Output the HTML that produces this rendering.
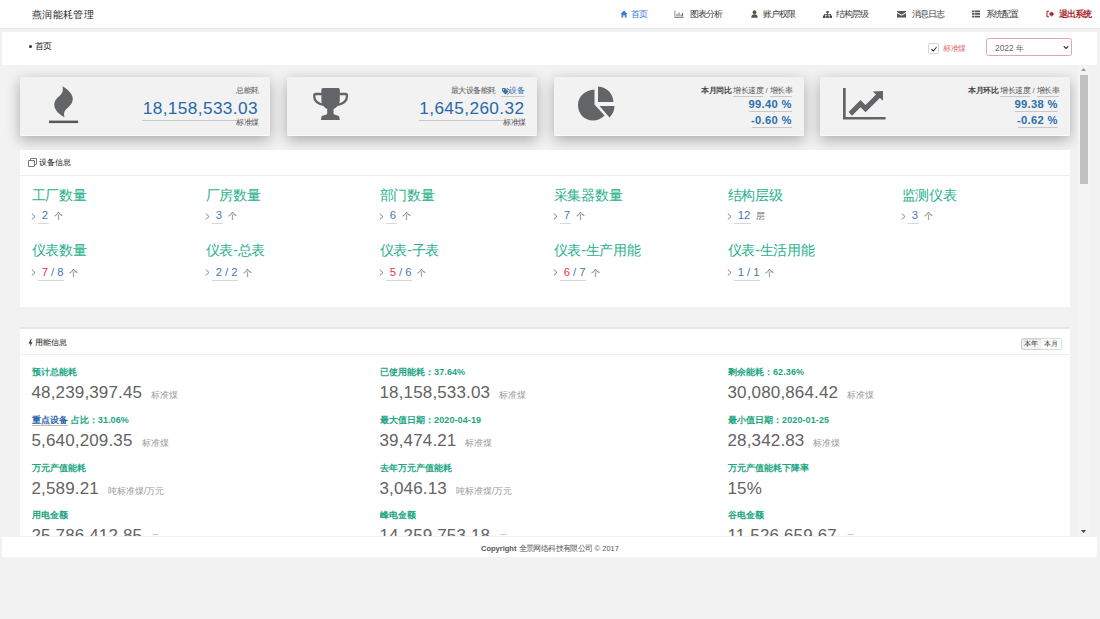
<!DOCTYPE html>
<html><head><meta charset="utf-8">
<style>
*{box-sizing:border-box;margin:0;padding:0}
html,body{width:1100px;height:619px;overflow:hidden;background:#f2f2f2;font-family:"Liberation Sans",sans-serif;color:#333}
.a{position:absolute;white-space:nowrap;line-height:1}
#hdr{position:absolute;left:0;top:0;width:1100px;height:28px;background:#fff;box-shadow:0 1px 2px rgba(0,0,0,.06)}
.nav{position:absolute;top:9.5px;font-size:8px;color:#3c3c3c;line-height:1}
.nav span{position:relative;top:.7px;font-size:8.6px;letter-spacing:-.9px}
.nav svg{position:absolute;top:0}
#bc{position:absolute;left:2px;top:32px;width:1095px;height:33px;background:#fff}
#scroll{position:absolute;left:0;top:65px;width:1100px;height:471px;overflow:hidden}
.card{position:absolute;top:77px;width:250px;height:59px;background:#f2f2f2;border-radius:2px;box-shadow:0 4px 14px rgba(0,0,0,.3),inset 0 -1px 0 #fafafa}
.panel{position:absolute;left:20px;width:1050px;background:#fff}
.ph{position:absolute;left:0;top:0;width:100%;border-bottom:1px solid #ececec}
.lbl{font-size:14px;color:#28b08c;letter-spacing:-.3px}
.gt{font-size:9px;color:#4a74b4}
.val{font-size:11.5px;color:#3f6fae}
.unit{font-size:8px;color:#777}
.ul{position:absolute;height:1px;background:#c9c9c9}
.tl{font-size:9px;color:#1ba581;font-weight:bold;letter-spacing:.1px}
.big{font-size:17px;color:#636363;letter-spacing:.15px}
.u2{font-size:8.5px;color:#999}
#inner{position:absolute;left:0;top:-65px;width:1100px;height:700px}
.num{font-size:17.2px;color:#2668a8;letter-spacing:.4px}
.pct{font-size:11.2px;color:#2c6fb0;font-weight:bold;letter-spacing:.3px}
.hd{font-size:7.5px;color:#555;letter-spacing:-.5px}
.vrow{font-size:11.3px;line-height:1}
.chev{display:inline-block;width:11px;color:#4a72b8;font-size:13px}
.vv{border-bottom:1px solid #d8d8d8;padding:0 0.5px 2px 4px}
.bl{color:#4a74b4}.rd{color:#e0353f}.sl{color:#4a74b4;margin:0 3px}
.unit{font-size:9px;color:#666;margin-left:5px}
.tl .pre{color:#2d64a8;border-bottom:1px solid #c9b9a0}
.nrow{line-height:1}
.u2{margin-left:9px}
</style></head><body>

<div id="hdr">
  <div class="a" style="left:32px;top:9.5px;font-size:10px;letter-spacing:.35px;color:#222">燕润能耗管理</div>
  <div class="nav" style="left:620px;color:#3a7bd5">
    <svg width="8" height="8" viewBox="0 0 16 16" style="left:0"><path fill="#3a7bd5" d="M8 1 L1 8 L3 8 L3 15 L6.5 15 L6.5 10.5 L9.5 10.5 L9.5 15 L13 15 L13 8 L15 8 Z"/></svg>
    <span style="margin-left:11px">首页</span></div>
  <div class="nav" style="left:674px">
    <svg width="10" height="8" viewBox="0 0 20 16" style="left:0"><path fill="#666" d="M1 1h1.5v13h17v1.5H1z M5 8h2v5H5z M9 5h2v8H9z M13 9h2v4h-2z M16 6h2v7h-2z"/></svg>
    <span style="margin-left:16px">图表分析</span></div>
  <div class="nav" style="left:751px">
    <svg width="7" height="8" viewBox="0 0 14 16" style="left:0"><circle cx="7" cy="4.5" r="3.8" fill="#555"/><path fill="#555" d="M0.5 15.5 C0.5 10 3 8.5 7 8.5 C11 8.5 13.5 10 13.5 15.5Z"/></svg>
    <span style="margin-left:12px">账户权限</span></div>
  <div class="nav" style="left:823px">
    <svg width="9" height="7" viewBox="0 0 18 14" style="left:0;top:1.5px"><path fill="#444" d="M6.8 0h4.4v4H6.8z M8.3 4h1.4v2.6H8.3z M2.2 6.2h13.6v1.4H2.2z M2.2 6.2h1.4v3H2.2z M14.4 6.2h1.4v3h-1.4z M8.3 6.2h1.4v3H8.3z M0 9h5v5H0z M6.5 9h5v5h-5z M13 9h5v5h-5z"/></svg>
    <span style="margin-left:13px">结构层级</span></div>
  <div class="nav" style="left:897px">
    <svg width="9" height="8" viewBox="0 0 18 16" style="left:0;top:0.5px"><path fill="#555" d="M0 2h18v2.2L9 9.5 0 4.2z M0 6.5l9 5 9-5V15H0z"/></svg>
    <span style="margin-left:14.5px">消息日志</span></div>
  <div class="nav" style="left:972px">
    <svg width="8" height="8" viewBox="0 0 16 16" style="left:0"><path fill="#555" d="M0 1h4v3.5H0z M5 1h11v3.5H5z M0 6.2h4v3.5H0z M5 6.2h11v3.5H5z M0 11.5h4V15H0z M5 11.5h11V15H5z"/></svg>
    <span style="margin-left:13.5px">系统配置</span></div>
  <div class="nav" style="left:1046px;color:#a8232c;font-weight:bold">
    <svg width="8" height="8" viewBox="0 0 16 16" style="left:0"><path fill="#a8232c" d="M6 1.5H2.5Q1 1.5 1 3v10q0 1.5 1.5 1.5H6v-2H3V3.5h3z M7 5h4V2l5 6-5 6v-3H7z"/></svg>
    <span style="margin-left:13px">退出系统</span></div>
</div>

<div id="bc">
  <div class="a" style="left:27px;top:13px;width:3.2px;height:3.2px;border-radius:50%;background:#333"></div>
  <div class="a" style="left:33px;top:10px;font-size:8.6px;letter-spacing:-.7px;color:#222">首页</div>
  <div class="a" style="left:926px;top:11px;width:10.5px;height:10.5px;border:1px solid #d4d4d4;border-radius:2px;background:#fff"></div>
  <svg class="a" style="left:928.5px;top:13.5px" width="6" height="6" viewBox="0 0 12 12"><path d="M1 6.5 L4.5 10 L11 2.5" stroke="#222" stroke-width="2.2" fill="none"/></svg>
  <div class="a" style="left:941px;top:13px;font-size:7.5px;letter-spacing:-.5px;color:#e06a6a">标准煤</div>
  <div class="a" style="left:983.5px;top:6.2px;width:86px;height:17.4px;border:1px solid #e8a4ae;border-radius:2.5px;background:#fff"></div>
  <div class="a" style="left:993px;top:12px;font-size:8.4px;color:#666">2022 年</div>
  <svg class="a" style="left:1061px;top:12.5px" width="6" height="5" viewBox="0 0 12 10"><path d="M1.5 2.5 L6 7 L10.5 2.5" stroke="#333" stroke-width="2.2" fill="none"/></svg>
</div>

<div id="scroll"><div id="inner">
  <!-- cards -->
  <div class="card" style="left:20px">
    <svg class="a" style="left:29px;top:7.5px" width="30" height="39" viewBox="0 0 30 39"><path fill="#626467" d="M13.6 1.2 C17.5 3.5 24 8.5 23.8 14 C23.6 19 19.5 22 16.5 25 C14.8 27 14.6 30 15.6 32.2 C10.5 29.5 5.5 25.5 5.3 20 C5.2 15.5 8.5 12.5 11.5 10 C13.8 8 14.2 4.5 13.6 1.2 Z"/><rect x="0" y="35.6" width="29.1" height="2.5" fill="#58595b"/></svg>
    <div class="a cj" style="right:11.5px;top:10.3px;font-size:7.5px;color:#555;letter-spacing:-.5px">总能耗</div>
    <div class="a num" style="right:12.1px;top:22.8px">18,158,533.03</div>
    <div class="ul" style="left:122px;top:42.5px;width:94px"></div>
    <div class="a cj" style="right:11.5px;top:41.8px;font-size:7.5px;color:#555;letter-spacing:-.5px">标准煤</div>
  </div>
  <div class="card" style="left:287px">
    <svg class="a" style="left:26px;top:11px" width="36" height="34" viewBox="0 0 36 34"><path fill="#626467" d="M8.4 1.6 Q8.4 0 10 0 H25.2 Q26.8 0 26.8 1.6 V12 C26.8 17 23.5 19.5 20.6 21 V26 C21.5 27 25.8 27.2 26.2 28.6 L26.8 32.1 H7.9 L8.5 28.6 C8.9 27.2 13.2 27 14.2 26 V21 C11.5 19.5 8.4 17 8.4 12Z"/><path fill="none" stroke="#626467" stroke-width="2.3" d="M9 6 H2.8 Q1.2 6 1.2 8 C1.2 12.5 5 15.8 10.8 16.8 M26.2 6 H32.4 Q34 6 34 8 C34 12.5 30.2 15.8 24.4 16.8"/></svg>
    <div class="a cj" style="right:41.5px;top:10.3px;font-size:7.5px;color:#555;letter-spacing:-.5px">最大设备能耗</div>
    <svg class="a" style="left:214.8px;top:10.8px" width="8" height="7" viewBox="0 0 16 14"><path fill="#3a6fb0" d="M0 1 V6 L7 13 L13 7 L6 0 H1Z M11 0 H8.5 L15.5 7 L9.5 13 L10.5 14 L17.5 7Z"/><circle cx="3" cy="3.5" r="1.3" fill="#f2f2f2"/></svg>
    <div class="a cj" style="right:13px;top:10.3px;font-size:7.5px;color:#3a6fb0;letter-spacing:-.5px">设备</div>
    <div class="ul" style="left:214px;top:19px;width:24px"></div>
    <div class="a num" style="right:12.6px;top:22.8px">1,645,260.32</div>
    <div class="ul" style="left:132px;top:42.5px;width:84px"></div>
    <div class="a cj" style="right:11.5px;top:41.8px;font-size:7.5px;color:#555;letter-spacing:-.5px">标准煤</div>
  </div>
  <div class="card" style="left:554px">
    <svg class="a" style="left:24px;top:8.5px" width="37" height="36" viewBox="0 0 37 36"><path fill="#626467" d="M16.5 3.5 V18.5 L26.5 29.5 C23.5 32.5 19.5 34.5 15 34.5 C6.5 34.5 0 28 0 19 C0 10.5 7 4 16.5 3.5Z M20 0.5 C29 1 35 7.5 35.5 16 H20Z M21.5 20 H36.5 C36.5 24.5 34.5 28.5 31.5 31.5Z"/></svg>
    <div class="a cj hd" style="left:147px;top:10.2px;color:#444;font-weight:bold">本月同比</div>
    <div class="a cj hd" style="left:179px;top:10.2px">增长速度</div>
    <div class="ul" style="left:179px;top:18.5px;width:30px"></div>
    <div class="a hd" style="left:211.5px;top:10.2px;color:#666">/</div>
    <div class="a cj hd" style="left:215.6px;top:10.2px">增长率</div>
    <div class="ul" style="left:215.5px;top:18.5px;width:22.5px"></div>
    <div class="a pct" style="right:12.3px;top:22.4px">99.40 %</div>
    <div class="ul" style="left:194.6px;top:34px;width:43px"></div>
    <div class="a pct" style="right:12.3px;top:38.4px">-0.60 %</div>
    <div class="ul" style="left:197.5px;top:50.2px;width:40px"></div>
  </div>
  <div class="card" style="left:820px">
    <svg class="a" style="left:22.5px;top:11px" width="43" height="32" viewBox="0 0 43 32"><path fill="#626467" d="M0 0 H2.7 V29 H42.6 V31.6 H0Z M5.6 23.9 L17.5 12 L22.5 17 L33.06 6.44 L29.8 3.5 L40 3 L40 12.7 L36.9 9.9 L22.5 24.3 L17.5 19.3 L9 27.8 Z"/></svg>
    <div class="a cj hd" style="left:148px;top:10.2px;color:#444;font-weight:bold">本月环比</div>
    <div class="a cj hd" style="left:180px;top:10.2px">增长速度</div>
    <div class="ul" style="left:180px;top:18.5px;width:30px"></div>
    <div class="a hd" style="left:212.5px;top:10.2px;color:#666">/</div>
    <div class="a cj hd" style="left:216.6px;top:10.2px">增长率</div>
    <div class="ul" style="left:216.5px;top:18.5px;width:22.5px"></div>
    <div class="a pct" style="right:12.3px;top:22.4px">99.38 %</div>
    <div class="ul" style="left:194.6px;top:34px;width:43px"></div>
    <div class="a pct" style="right:12.3px;top:38.4px">-0.62 %</div>
    <div class="ul" style="left:197.5px;top:50.2px;width:40px"></div>
  </div>

  <!-- panel 1 -->
  <div class="panel" style="top:150px;height:157px">
    <svg class="a" style="left:8.2px;top:8.2px" width="9" height="9" viewBox="0 0 18 18"><path fill="none" stroke="#555" stroke-width="1.6" d="M5 5 V2 Q5 1 6 1 H16 Q17 1 17 2 V12 Q17 13 16 13 H13 M1.8 5 H12 Q13 5 13 6 V16 Q13 17 12 17 H2 Q1 17 1 16 V6 Q1 5 2 5Z"/></svg>
    <div class="a cj" style="left:19px;top:9.2px;font-size:8px;color:#111">设备信息</div>
    <div class="ph" style="height:26px"></div>
    <div class="a cj lbl" style="left:11.8px;top:37.80px">工厂数量</div>
    <svg class="a" style="left:10.5px;top:62.70px" width="5" height="7" viewBox="0 0 5 7"><path d="M0.8 0.6 L4 3.5 L0.8 6.4" stroke="#5a7fc0" stroke-width="0.95" fill="none"/></svg>
    <div class="a vrow" style="left:17.8px;top:60.20px"><span class="vv"><span class="bl">2</span></span><span class="cj unit">个</span></div>
    <div class="a cj lbl" style="left:185.8px;top:37.80px">厂房数量</div>
    <svg class="a" style="left:184.5px;top:62.70px" width="5" height="7" viewBox="0 0 5 7"><path d="M0.8 0.6 L4 3.5 L0.8 6.4" stroke="#5a7fc0" stroke-width="0.95" fill="none"/></svg>
    <div class="a vrow" style="left:191.8px;top:60.20px"><span class="vv"><span class="bl">3</span></span><span class="cj unit">个</span></div>
    <div class="a cj lbl" style="left:359.8px;top:37.80px">部门数量</div>
    <svg class="a" style="left:358.5px;top:62.70px" width="5" height="7" viewBox="0 0 5 7"><path d="M0.8 0.6 L4 3.5 L0.8 6.4" stroke="#5a7fc0" stroke-width="0.95" fill="none"/></svg>
    <div class="a vrow" style="left:365.8px;top:60.20px"><span class="vv"><span class="bl">6</span></span><span class="cj unit">个</span></div>
    <div class="a cj lbl" style="left:533.8px;top:37.80px">采集器数量</div>
    <svg class="a" style="left:532.5px;top:62.70px" width="5" height="7" viewBox="0 0 5 7"><path d="M0.8 0.6 L4 3.5 L0.8 6.4" stroke="#5a7fc0" stroke-width="0.95" fill="none"/></svg>
    <div class="a vrow" style="left:539.8px;top:60.20px"><span class="vv"><span class="bl">7</span></span><span class="cj unit">个</span></div>
    <div class="a cj lbl" style="left:707.8px;top:37.80px">结构层级</div>
    <svg class="a" style="left:706.5px;top:62.70px" width="5" height="7" viewBox="0 0 5 7"><path d="M0.8 0.6 L4 3.5 L0.8 6.4" stroke="#5a7fc0" stroke-width="0.95" fill="none"/></svg>
    <div class="a vrow" style="left:713.8px;top:60.20px"><span class="vv"><span class="bl">12</span></span><span class="cj unit">层</span></div>
    <div class="a cj lbl" style="left:881.8px;top:37.80px">监测仪表</div>
    <svg class="a" style="left:880.5px;top:62.70px" width="5" height="7" viewBox="0 0 5 7"><path d="M0.8 0.6 L4 3.5 L0.8 6.4" stroke="#5a7fc0" stroke-width="0.95" fill="none"/></svg>
    <div class="a vrow" style="left:887.8px;top:60.20px"><span class="vv"><span class="bl">3</span></span><span class="cj unit">个</span></div>
    <div class="a cj lbl" style="left:11.8px;top:93.20px">仪表数量</div>
    <svg class="a" style="left:10.5px;top:119.20px" width="5" height="7" viewBox="0 0 5 7"><path d="M0.8 0.6 L4 3.5 L0.8 6.4" stroke="#5a7fc0" stroke-width="0.95" fill="none"/></svg>
    <div class="a vrow" style="left:17.8px;top:116.70px"><span class="vv"><span class="rd">7</span><span class="sl">/</span><span class="bl">8</span></span><span class="cj unit">个</span></div>
    <div class="a cj lbl" style="left:185.8px;top:93.20px">仪表-总表</div>
    <svg class="a" style="left:184.5px;top:119.20px" width="5" height="7" viewBox="0 0 5 7"><path d="M0.8 0.6 L4 3.5 L0.8 6.4" stroke="#5a7fc0" stroke-width="0.95" fill="none"/></svg>
    <div class="a vrow" style="left:191.8px;top:116.70px"><span class="vv"><span class="bl">2</span><span class="sl">/</span><span class="bl">2</span></span><span class="cj unit">个</span></div>
    <div class="a cj lbl" style="left:359.8px;top:93.20px">仪表-子表</div>
    <svg class="a" style="left:358.5px;top:119.20px" width="5" height="7" viewBox="0 0 5 7"><path d="M0.8 0.6 L4 3.5 L0.8 6.4" stroke="#5a7fc0" stroke-width="0.95" fill="none"/></svg>
    <div class="a vrow" style="left:365.8px;top:116.70px"><span class="vv"><span class="rd">5</span><span class="sl">/</span><span class="bl">6</span></span><span class="cj unit">个</span></div>
    <div class="a cj lbl" style="left:533.8px;top:93.20px">仪表-生产用能</div>
    <svg class="a" style="left:532.5px;top:119.20px" width="5" height="7" viewBox="0 0 5 7"><path d="M0.8 0.6 L4 3.5 L0.8 6.4" stroke="#5a7fc0" stroke-width="0.95" fill="none"/></svg>
    <div class="a vrow" style="left:539.8px;top:116.70px"><span class="vv"><span class="rd">6</span><span class="sl">/</span><span class="bl">7</span></span><span class="cj unit">个</span></div>
    <div class="a cj lbl" style="left:707.8px;top:93.20px">仪表-生活用能</div>
    <svg class="a" style="left:706.5px;top:119.20px" width="5" height="7" viewBox="0 0 5 7"><path d="M0.8 0.6 L4 3.5 L0.8 6.4" stroke="#5a7fc0" stroke-width="0.95" fill="none"/></svg>
    <div class="a vrow" style="left:713.8px;top:116.70px"><span class="vv"><span class="bl">1</span><span class="sl">/</span><span class="bl">1</span></span><span class="cj unit">个</span></div>
  </div>
  <!-- panel 2 -->
  <div class="panel" style="top:327px;height:300px;border-top:2px solid #e6e6e6">
    <svg class="a" style="left:8px;top:10px" width="5" height="8" viewBox="0 0 10 16"><path fill="#333" d="M6 0 L1 9 H5 L3.5 16 L9 6.5 H5.5 L7.5 0Z"/></svg>
    <div class="a cj" style="left:15px;top:9.5px;font-size:8px;color:#111">用能信息</div>
    <div class="ph" style="height:25.5px;border-bottom-color:#eee"></div>
    <div class="a" style="left:1001px;top:8.5px;width:20.5px;height:12.5px;border:1px solid #cfcfcf;border-radius:2px 0 0 2px;background:#f4f4f4;box-shadow:inset 0 1px 2px rgba(0,0,0,.1)"></div>
    <div class="a" style="left:1021px;top:8.5px;width:20.5px;height:12.5px;border:1px solid #ddd;border-left:none;border-radius:0 2px 2px 0;background:#fff"></div>
    <div class="a cj" style="left:1004px;top:11.2px;font-size:7px;color:#333">本年</div>
    <div class="a cj" style="left:1024px;top:11.2px;font-size:7px;color:#333">本月</div>
    <div class="a cj tl" style="left:11.5px;top:38.90px">预计总能耗</div>
    <div class="a nrow" style="left:11.5px;top:55.20px"><span class="big">48,239,397.45</span><span class="cj u2">标准煤</span></div>
    <div class="a cj tl" style="left:359.5px;top:38.90px">已使用能耗：37.64%</div>
    <div class="a nrow" style="left:359.5px;top:55.20px"><span class="big">18,158,533.03</span><span class="cj u2">标准煤</span></div>
    <div class="a cj tl" style="left:707.5px;top:38.90px">剩余能耗：62.36%</div>
    <div class="a nrow" style="left:707.5px;top:55.20px"><span class="big">30,080,864.42</span><span class="cj u2">标准煤</span></div>
    <div class="a cj tl" style="left:11.5px;top:86.90px"><span class="pre">重点设备</span> 占比：31.06%</div>
    <div class="a nrow" style="left:11.5px;top:103.40px"><span class="big">5,640,209.35</span><span class="cj u2">标准煤</span></div>
    <div class="a cj tl" style="left:359.5px;top:86.90px">最大值日期：2020-04-19</div>
    <div class="a nrow" style="left:359.5px;top:103.40px"><span class="big">39,474.21</span><span class="cj u2">标准煤</span></div>
    <div class="a cj tl" style="left:707.5px;top:86.90px">最小值日期：2020-01-25</div>
    <div class="a nrow" style="left:707.5px;top:103.40px"><span class="big">28,342.83</span><span class="cj u2">标准煤</span></div>
    <div class="a cj tl" style="left:11.5px;top:135.20px">万元产值能耗</div>
    <div class="a nrow" style="left:11.5px;top:151.10px"><span class="big">2,589.21</span><span class="cj u2">吨标准煤/万元</span></div>
    <div class="a cj tl" style="left:359.5px;top:135.20px">去年万元产值能耗</div>
    <div class="a nrow" style="left:359.5px;top:151.10px"><span class="big">3,046.13</span><span class="cj u2">吨标准煤/万元</span></div>
    <div class="a cj tl" style="left:707.5px;top:135.20px">万元产值能耗下降率</div>
    <div class="a nrow" style="left:707.5px;top:151.10px"><span class="big">15%</span></div>
    <div class="a cj tl" style="left:11.5px;top:181.90px">用电金额</div>
    <div class="a nrow" style="left:11.5px;top:198.00px"><span class="big">25,786,412.85</span><span class="cj u2">元</span></div>
    <div class="a cj tl" style="left:359.5px;top:181.90px">峰电金额</div>
    <div class="a nrow" style="left:359.5px;top:198.00px"><span class="big">14,259,753.18</span><span class="cj u2">元</span></div>
    <div class="a cj tl" style="left:707.5px;top:181.90px">谷电金额</div>
    <div class="a nrow" style="left:707.5px;top:198.00px"><span class="big">11,526,659.67</span><span class="cj u2">元</span></div>
  </div>

  <!-- scrollbar -->
  <div class="a" style="left:1078px;top:65px;width:11px;height:471px;background:#f4f4f4"></div>
  <div class="a" style="left:1080px;top:74.7px;width:7.5px;height:109.7px;background:#c1c1c1"></div>
  <svg class="a" style="left:1081px;top:68px" width="5" height="3" viewBox="0 0 10 6"><path d="M0 6 L5 0 L10 6Z" fill="#9a9a9a"/></svg>
  <svg class="a" style="left:1081px;top:530px" width="5" height="3" viewBox="0 0 10 6"><path d="M0 0 L5 6 L10 0Z" fill="#444"/></svg>
</div></div>

<div class="a" style="left:2px;top:536px;width:1095px;height:21px;background:#fff;border-top:1px solid #f2f2f2"></div>
<div class="a" style="left:481px;top:544.7px;font-size:7.5px;color:#555"><b>Copyright</b> <span style="letter-spacing:-.6px">全景网络科技有限公司</span> © 2017</div>

</body></html>
